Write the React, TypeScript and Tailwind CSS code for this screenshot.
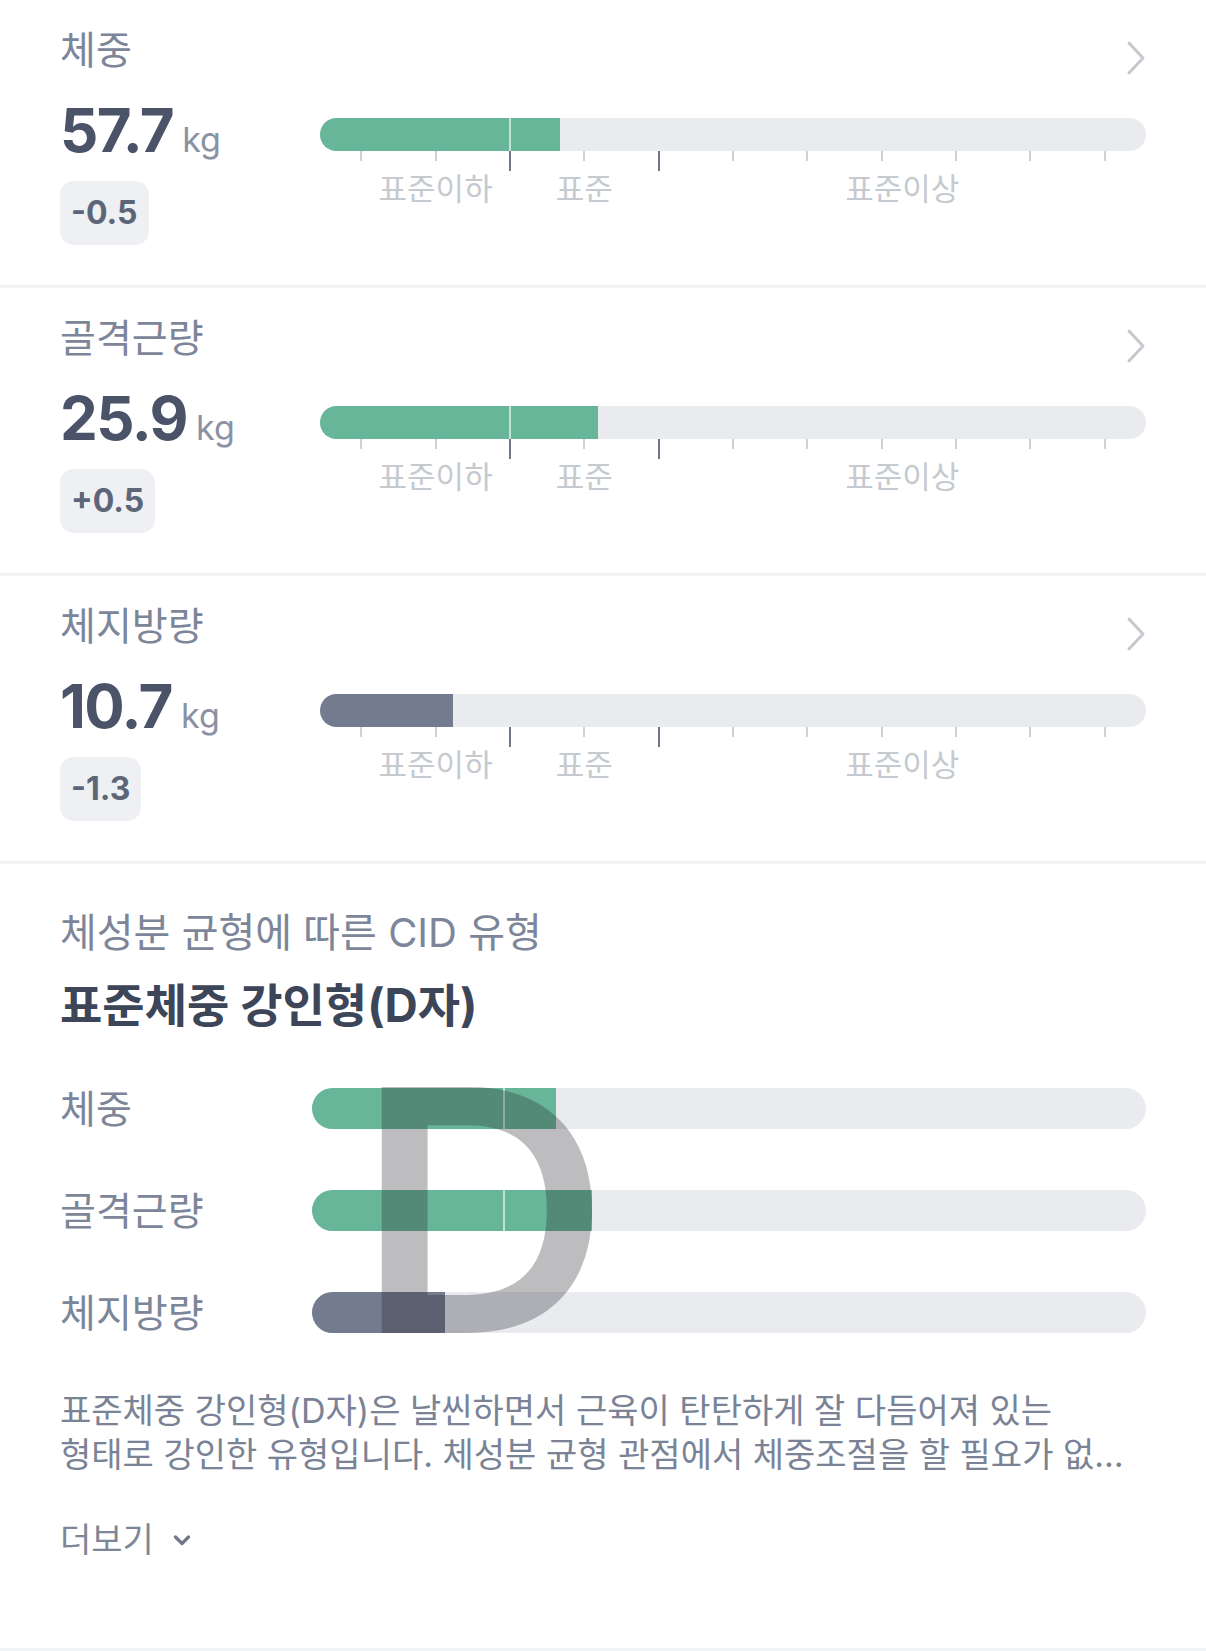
import React from "react";

type Metric = {
  label: string;
  value: string;
  delta: string;
  fill: number;
  tone: "green" | "slate";
};

const metrics: Metric[] = [
  { label: "체중", value: "57.7", delta: "-0.5", fill: 29.1, tone: "green" },
  { label: "골격근량", value: "25.9", delta: "+0.5", fill: 33.7, tone: "green" },
  { label: "체지방량", value: "10.7", delta: "-1.3", fill: 16.1, tone: "slate" },
];

const balance = [
  { label: "체중", fill: 29.2, tone: "green" },
  { label: "골격근량", fill: 33.6, tone: "green" },
  { label: "체지방량", fill: 16.0, tone: "slate" },
] as const;

// scale marks under each gauge: 11 ticks, the 3rd and 5th mark the standard range
const ticks = Array.from({ length: 11 }, (_, i) => ({ pos: 5 + i * 9, major: i === 2 || i === 4 }));

const rangeLabels = [
  { text: "표준이하", pos: 14 },
  { text: "표준", pos: 32 },
  { text: "표준이상", pos: 70.5 },
];

const STANDARD_LINE = 23;

function fillClass(tone: string) {
  return tone === "green" ? "bg-[#67b699]" : "bg-[#737c8f]";
}

function Gauge({ fill, tone, tall }: { fill: number; tone: string; tall?: boolean }) {
  return (
    <div
      className={
        tall
          ? "relative h-[41px] w-full overflow-hidden rounded-full bg-[#e9ebef]"
          : "relative h-[33px] w-full overflow-hidden rounded-full bg-[#e9ebef]"
      }
    >
      <div className={`absolute inset-y-0 left-0 ${fillClass(tone)}`} style={{ width: `${fill}%` }} />
      {fill > STANDARD_LINE && (
        <div
          className="absolute inset-y-0 w-[2px] -translate-x-1/2 bg-white/60"
          style={{ left: `${STANDARD_LINE}%` }}
        />
      )}
    </div>
  );
}

function ChevronRight() {
  return (
    <svg viewBox="0 0 20 36" className="mt-[12px] h-[36px] w-[20px] shrink-0" fill="none">
      <path d="M3 3 L17 18 L3 33" stroke="#c5c8ce" strokeWidth="3" strokeLinecap="round" strokeLinejoin="round" />
    </svg>
  );
}

function MetricSection({ m }: { m: Metric }) {
  return (
    <section className="border-b-[3px] border-[#f2f3f5] px-[60px] pt-[28px] pb-[40px]">
      <div className="flex h-[44px] items-start justify-between">
        <h3 className="text-[39px] leading-[44px] text-[#7d8699]">{m.label}</h3>
        <ChevronRight />
      </div>
      <div className="mt-[28px] flex">
        <div className="w-[260px] shrink-0">
          <div className="flex h-[60px] items-baseline">
            <span className="text-[60px] leading-[60px] font-bold tracking-tight text-[#4a5367]">{m.value}</span>
            <span className="ml-[9px] text-[34px] leading-none text-[#8a92a3]">kg</span>
          </div>
          <div className="mt-[21px] flex h-[64px] w-fit items-center rounded-[14px] bg-[#eef0f3] px-[11px] text-[32px] font-bold text-[#5d6679]">
            {m.delta}
          </div>
        </div>
        <div className="flex-1 pt-[18px]">
          <Gauge fill={m.fill} tone={m.tone} />
          <div className="relative h-[60px]">
            {ticks.map((t, i) => (
              <div
                key={i}
                className={
                  t.major
                    ? "absolute top-0 h-[20px] w-[2px] -translate-x-1/2 bg-[#6e7688]"
                    : "absolute top-0 h-[10px] w-[2px] -translate-x-1/2 bg-[#cdd0d6]"
                }
                style={{ left: `${t.pos}%` }}
              />
            ))}
            {rangeLabels.map((l) => (
              <span
                key={l.text}
                className="absolute top-[23px] -translate-x-1/2 whitespace-nowrap text-[31px] leading-[30px] text-[#c5c9d0]"
                style={{ left: `${l.pos}%` }}
              >
                {l.text}
              </span>
            ))}
          </div>
        </div>
      </div>
    </section>
  );
}

export default function App() {
  return (
    <div className="min-h-screen w-[1206px] bg-white font-[Inter,'Noto_Sans_CJK_KR',sans-serif]">
      {metrics.map((m) => (
        <MetricSection key={m.label} m={m} />
      ))}

      {/* CID type summary */}
      <section className="border-b-[3px] border-[#f2f3f5] px-[60px] pt-[46px] pb-[86px]">
        <p className="text-[40px] leading-[46px] text-[#7d8699]">체성분 균형에 따른 CID 유형</p>
        <h2 className="mt-[24px] text-[46px] leading-[50px] font-bold text-[#3d4558]">표준체중 강인형(D자)</h2>

        <div className="relative mt-[58px] flex flex-col gap-[61px]">
          {balance.map((b) => (
            <div key={b.label} className="flex h-[41px] items-center">
              <span className="w-[252px] shrink-0 text-[39px] leading-[44px] text-[#7d8699]">{b.label}</span>
              <Gauge fill={b.fill} tone={b.tone} tall />
            </div>
          ))}
          <span className="pointer-events-none absolute top-0 left-[296px] origin-left scale-x-[1.04] text-[338px] leading-[246px] font-semibold text-[#23252a4d] select-none">
            D
          </span>
        </div>

        <p className="mt-[56px] line-clamp-2 max-w-[1080px] break-keep text-[34px] leading-[44px] text-[#7a8396]">
          표준체중 강인형(D자)은 날씬하면서 근육이 탄탄하게 잘 다듬어져 있는 형태로 강인한 유형입니다. 체성분 균형 관점에서 체중조절을 할 필요가 없는 이상적인 체형입니다.
        </p>

        <button className="mt-[41px] flex h-[44px] items-center gap-[19px] text-[34px] leading-[44px] text-[#7e8799]">
          더보기
          <svg viewBox="0 0 18 11" className="h-[11px] w-[18px]" fill="none">
            <path d="M2.5 2 L9 8.5 L15.5 2" stroke="#6f7789" strokeWidth="3.2" strokeLinecap="round" strokeLinejoin="round" />
          </svg>
        </button>
      </section>
    </div>
  );
}
